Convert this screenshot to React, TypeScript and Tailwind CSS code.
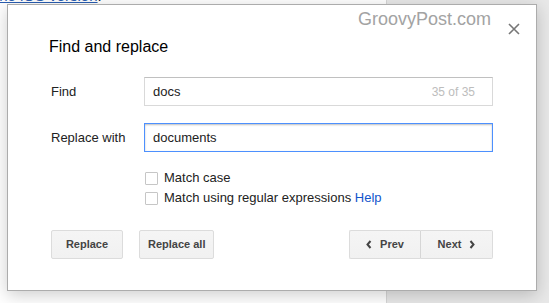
import React from 'react';

const font = { fontFamily: '"Liberation Sans", Arial, sans-serif' };

function Chevron({ dir }: { dir: 'left' | 'right' }) {
    return (
        <svg width="6" height="9" viewBox="0 0 6 9" className="shrink-0">
            <path
                d={dir === 'left' ? 'M4.5 1L1.5 4.5L4.5 8' : 'M1.5 1L4.5 4.5L1.5 8'}
                fill="none"
                stroke="#444"
                strokeWidth="2"
            />
        </svg>
    );
}

function Checkbox({ children }: { children: React.ReactNode }) {
    return (
        <label className="flex items-center h-[20px] text-[13px] text-[#222]">
            <span className="ml-[1px] w-[13px] h-[13px] border border-[#c6c6c6] rounded-[1px] bg-white" />
            <span className="ml-[6px]">{children}</span>
        </label>
    );
}

function Button({ children, className = '' }: { children: React.ReactNode; className?: string }) {
    return (
        <button
            className={`h-[29px] min-w-[72px] px-2 flex items-center justify-center gap-[8px] text-[11px] font-bold text-[#444] bg-gradient-to-b from-[#f5f5f5] to-[#f1f1f1] border border-[#dcdcdc] ${className}`}
        >
            {children}
        </button>
    );
}

export default function App() {
    return (
        <div className="relative w-[549px] h-[303px] overflow-hidden flex bg-[#e8e8e8]" style={font}>
            {/* page behind the dialog */}
            <div className="w-[387px] h-full bg-white border-r border-[#d6d6d6]">
                <p className="mt-[-12px] ml-[-5px] text-[15px] leading-[15px] text-[#2a5db0]">
                    <span className="underline">the iOS version</span>
                    <span className="text-[#222]">.</span>
                </p>
            </div>

            {/* dialog */}
            <div className="absolute left-[7px] top-[4px] w-[530px] h-[287px] bg-white border border-[#acacac] shadow-[0_4px_16px_rgba(0,0,0,0.2)]">
                <div className="absolute left-[350px] top-[5px] text-[18px] leading-[18px] text-[#a3a3a3]">GroovyPost.com</div>
                <button className="absolute left-[500px] top-[18px] w-[12px] h-[12px]">
                    <svg width="12" height="12" viewBox="0 0 12 12">
                        <path d="M1 1L11 11M11 1L1 11" stroke="#777" strokeWidth="1.6" />
                    </svg>
                </button>

                <h1 className="mt-[34px] ml-[41px] text-[16px] leading-[16px] text-black">Find and replace</h1>

                <div className="ml-[43px] w-[442px]">
                    <div className="mt-[22px] flex items-center">
                        <span className="w-[93px] text-[13px] text-[#222]">Find</span>
                        <div className="w-[349px] h-[29px] flex items-center justify-between pl-2 pr-[17px] border border-[#d9d9d9] border-t-[#c0c0c0] text-[13px] text-[#222]">
                            <span>docs</span>
                            <span className="text-[12px] text-[#bdbdbd]">35 of 35</span>
                        </div>
                    </div>

                    <div className="mt-[17px] flex items-center">
                        <span className="w-[93px] text-[13px] text-[#222]">Replace with</span>
                        <div className="w-[349px] h-[29px] flex items-center pl-2 border border-[#4d90fe] shadow-[inset_0_1px_2px_rgba(0,0,0,0.25)] text-[13px] text-[#222]">
                            documents
                        </div>
                    </div>

                    <div className="mt-[16px] ml-[93px] flex flex-col">
                        <Checkbox>Match case</Checkbox>
                        <Checkbox>
                            Match using regular expressions <span className="text-[#1155cc]">Help</span>
                        </Checkbox>
                    </div>

                    <div className="mt-[22px] flex items-center">
                        <Button className="rounded-[2px]">Replace</Button>
                        <Button className="ml-[16px] rounded-[2px]">Replace all</Button>
                        <div className="ml-auto flex">
                            <Button className="w-[71px] rounded-l-[2px] border-r-[#d6d6d6]">
                                <Chevron dir="left" />
                                Prev
                            </Button>
                            <Button className="w-[72px] rounded-r-[2px] border-l-0">
                                Next
                                <Chevron dir="right" />
                            </Button>
                        </div>
                    </div>
                </div>
            </div>
        </div>
    );
}
